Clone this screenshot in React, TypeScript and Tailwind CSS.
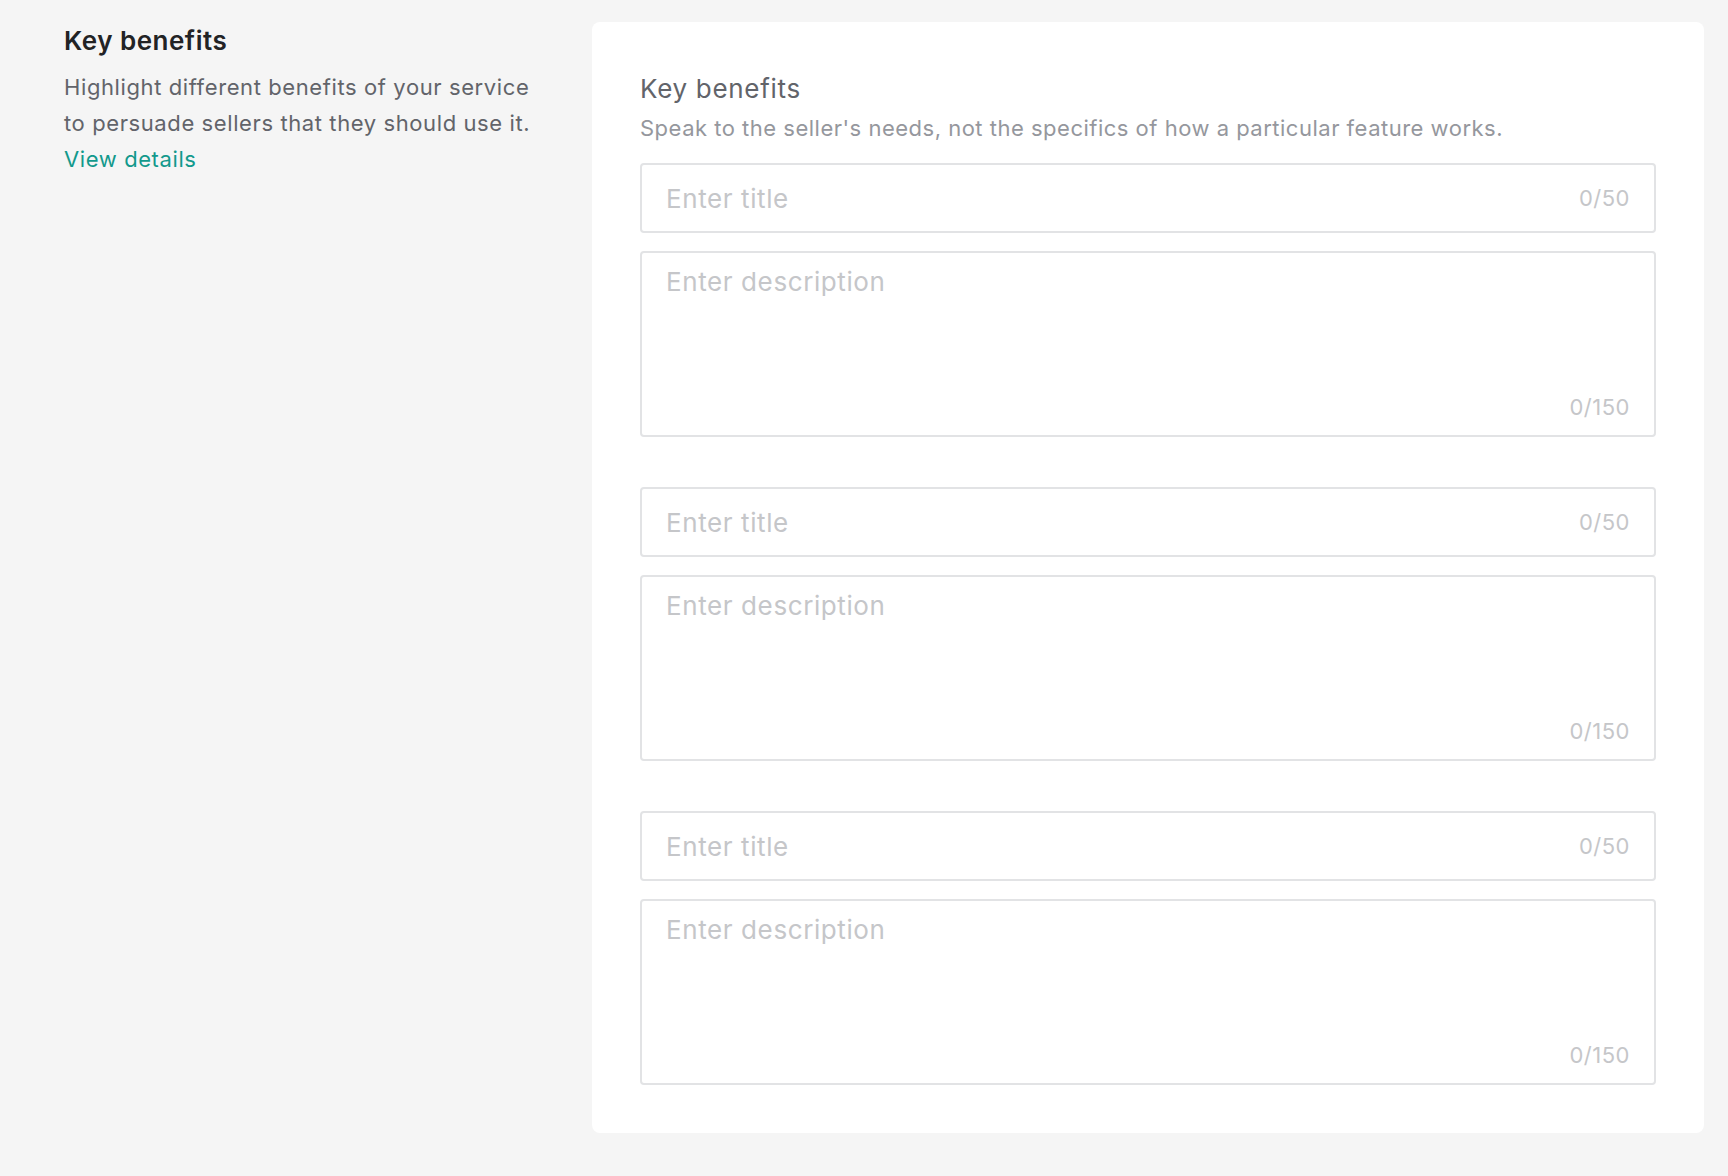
import React from "react";

function Group() {
  return (
    <div className="flex flex-col gap-[18px]">
      <div className="h-[70px] border-2 border-[#e2e3e5] rounded-[4px] flex items-center justify-between px-[24px]">
        <span className="text-[26px] tracking-[0.6px] text-[#c5c6c9]">Enter title</span>
        <span className="text-[22px] tracking-[0.5px] text-[#c5c6c9]">0/50</span>
      </div>
      <div className="h-[186px] border-2 border-[#e2e3e5] rounded-[4px] flex flex-col justify-between px-[24px] pt-[11px] pb-[12px]">
        <span className="text-[26px] tracking-[0.6px] leading-[36px] text-[#c5c6c9]">Enter description</span>
        <span className="text-[22px] tracking-[0.5px] leading-[32px] text-[#c5c6c9] self-end">0/150</span>
      </div>
    </div>
  );
}

export default function App() {
  return (
    <div
      className="min-h-screen bg-[#f5f5f5] flex pl-[64px] pr-[24px] pt-[22px] pb-[43px]"
      style={{ fontFamily: "Inter, 'Noto Sans', sans-serif" }}
    >
      <div className="w-[470px] shrink-0">
        <h2 className="text-[26px] tracking-[0.5px] leading-[36px] font-semibold text-[#222325] pt-[1px]">Key benefits</h2>
        <p className="mt-[10px] text-[22px] tracking-[0.6px] leading-[36px] text-[#62646a]">
          Highlight different benefits of your service to persuade sellers that they should use it.
          <br />
          <a className="text-[#12998c]">View details</a>
        </p>
      </div>
      <div className="ml-[58px] flex-1 bg-white rounded-[8px] px-[48px] pt-[51px] pb-[48px] self-start">
        <h3 className="text-[26px] tracking-[0.7px] leading-[32px] text-[#62646a]">Key benefits</h3>
        <p className="text-[22px] tracking-[0.5px] leading-[28px] text-[#95979d] mt-[9px]">
          Speak to the seller's needs, not the specifics of how a particular feature works.
        </p>
        <div className="mt-[21px] flex flex-col gap-[50px]">
          <Group />
          <Group />
          <Group />
        </div>
      </div>
    </div>
  );
}
